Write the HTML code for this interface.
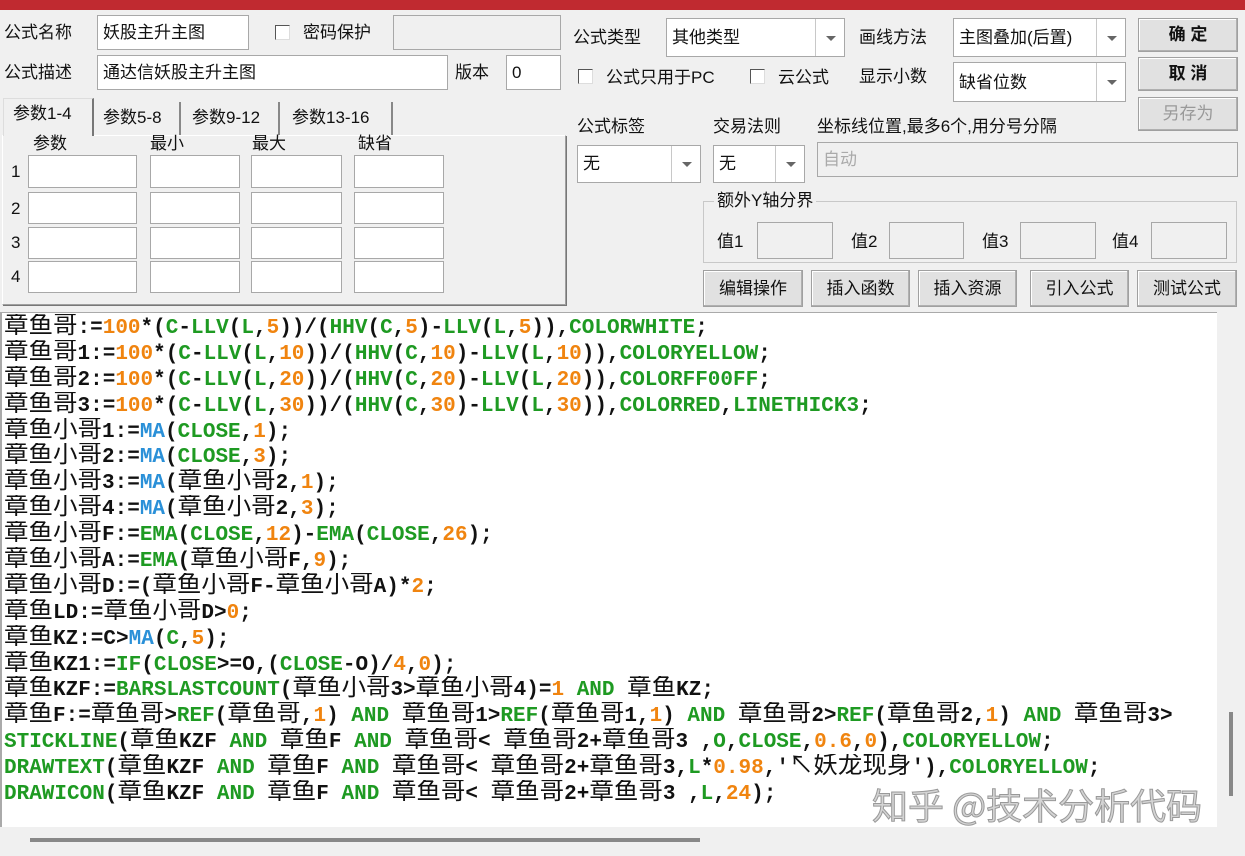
<!DOCTYPE html>
<html><head><meta charset="utf-8"><style>
*{box-sizing:border-box;margin:0;padding:0}
body{width:1245px;height:856px;background:#f0f0f0;position:relative;overflow:hidden;font-family:"Liberation Sans","Noto Sans CJK SC",sans-serif;font-size:17px;color:#111}
.a{position:absolute}
.t{position:absolute;white-space:nowrap;line-height:20px}
.in{position:absolute;background:#fff;border:1px solid #a8a8a8;padding:2px 5px;line-height:30px;white-space:nowrap}
.gi{background:#f0f0f0}
.sel{position:absolute;background:#fff;border:1px solid #a8a8a8;padding-left:5px;white-space:nowrap}
.sel .ar{position:absolute;right:0;top:0;bottom:0;width:29px;border-left:1px solid #c8c8c8}
.sel .ar:after{content:"";position:absolute;left:10px;top:50%;margin-top:-2px;border-left:5px solid transparent;border-right:5px solid transparent;border-top:5px solid #666}
.btn{position:absolute;background:#e1e1e1;border:1px solid #a0a0a0;box-shadow:inset -1px -1px 0 #b0b0b0,inset 1px 1px 0 #fff;text-align:center;white-space:nowrap}
.cb{position:absolute;width:15px;height:15px;background:#fff;border:1px solid #555;border-right-color:#ddd;border-bottom-color:#ddd}
.code{position:absolute;left:0;top:312px;width:1217px;height:515px;background:#fff;overflow:hidden;border-top:1px solid #aaa;border-left:2px solid #aaa;padding-top:1px}
.code div{font-family:"Liberation Mono",monospace;font-weight:bold;font-size:21px;height:25.9px;line-height:25.9px;margin-left:2px;color:#111;white-space:pre;overflow:hidden}
.c{font-family:"Noto Sans CJK SC","WenQuanYi Zen Hei",sans-serif;font-weight:normal;font-size:24.5px;line-height:20px}
.g{color:#1e9a22}.o{color:#f0840f}.b{color:#2a90d8}
</style></head><body>
<div class="a" style="left:0;top:0;width:1245px;height:10px;background:#c02a30"></div>

<div class="t" style="left:4px;top:23px">公式名称</div>
<div class="in" style="left:97px;top:15px;width:152px;height:35px">妖股主升主图</div>
<div class="cb" style="left:275px;top:25px"></div>
<div class="t" style="left:303px;top:23px">密码保护</div>
<div class="in gi" style="left:393px;top:15px;width:168px;height:35px"></div>
<div class="t" style="left:4px;top:63px">公式描述</div>
<div class="in" style="left:97px;top:55px;width:351px;height:35px">通达信妖股主升主图</div>
<div class="t" style="left:455px;top:63px">版本</div>
<div class="in" style="left:506px;top:55px;width:55px;height:35px">0</div>

<div class="a" style="left:2px;top:135px;width:564px;height:170px;border:1px solid #a0a0a0;border-top-color:#fff;border-left-color:#fff;box-shadow:1px 1px 0 #777"></div>
<div class="a" style="left:3px;top:98px;width:91px;height:38px;background:#f0f0f0;border:1px solid #ddd;border-bottom:none;border-right:2px solid #777"></div>
<div class="t" style="left:13px;top:104px">参数1-4</div>
<div class="a" style="left:95px;top:102px;width:86px;height:33px;border-right:2px solid #888"></div>
<div class="t" style="left:103px;top:108px">参数5-8</div>
<div class="a" style="left:183px;top:102px;width:97px;height:33px;border-right:2px solid #888"></div>
<div class="t" style="left:192px;top:108px">参数9-12</div>
<div class="a" style="left:282px;top:102px;width:111px;height:33px;border-right:2px solid #888"></div>
<div class="t" style="left:292px;top:108px">参数13-16</div>
<div class="t" style="left:33px;top:134px">参数</div>
<div class="t" style="left:150px;top:134px">最小</div>
<div class="t" style="left:252px;top:134px">最大</div>
<div class="t" style="left:358px;top:134px">缺省</div>
<div class="t" style="left:11px;top:162px">1</div>
<div class="t" style="left:11px;top:199px">2</div>
<div class="t" style="left:11px;top:233px">3</div>
<div class="t" style="left:11px;top:267px">4</div>
<div class="in" style="left:28px;top:155px;width:109px;height:33px"></div>
<div class="in" style="left:150px;top:155px;width:90px;height:33px"></div>
<div class="in" style="left:251px;top:155px;width:91px;height:33px"></div>
<div class="in" style="left:354px;top:155px;width:90px;height:33px"></div>
<div class="in" style="left:28px;top:192px;width:109px;height:32px"></div>
<div class="in" style="left:150px;top:192px;width:90px;height:32px"></div>
<div class="in" style="left:251px;top:192px;width:91px;height:32px"></div>
<div class="in" style="left:354px;top:192px;width:90px;height:32px"></div>
<div class="in" style="left:28px;top:227px;width:109px;height:32px"></div>
<div class="in" style="left:150px;top:227px;width:90px;height:32px"></div>
<div class="in" style="left:251px;top:227px;width:91px;height:32px"></div>
<div class="in" style="left:354px;top:227px;width:90px;height:32px"></div>
<div class="in" style="left:28px;top:261px;width:109px;height:32px"></div>
<div class="in" style="left:150px;top:261px;width:90px;height:32px"></div>
<div class="in" style="left:251px;top:261px;width:91px;height:32px"></div>
<div class="in" style="left:354px;top:261px;width:90px;height:32px"></div>

<div class="t" style="left:573px;top:28px">公式类型</div>
<div class="sel" style="left:666px;top:18px;width:179px;height:39px;line-height:37px">其他类型<div class="ar"></div></div>
<div class="t" style="left:859px;top:28px">画线方法</div>
<div class="sel" style="left:953px;top:18px;width:173px;height:39px;line-height:37px">主图叠加(后置)<div class="ar"></div></div>
<div class="btn" style="left:1138px;top:18px;width:100px;height:34px;line-height:32px;font-weight:bold">确 定</div>
<div class="btn" style="left:1138px;top:57px;width:100px;height:34px;line-height:32px;font-weight:bold">取 消</div>
<div class="btn" style="left:1138px;top:97px;width:100px;height:34px;line-height:32px;color:#999">另存为</div>
<div class="cb" style="left:578px;top:69px"></div>
<div class="t" style="left:606px;top:68px">公式只用于PC</div>
<div class="cb" style="left:750px;top:69px"></div>
<div class="t" style="left:778px;top:68px">云公式</div>
<div class="t" style="left:859px;top:67px">显示小数</div>
<div class="sel" style="left:953px;top:62px;width:173px;height:40px;line-height:40px">缺省位数<div class="ar"></div></div>

<div class="t" style="left:577px;top:117px">公式标签</div>
<div class="t" style="left:713px;top:117px">交易法则</div>
<div class="t" style="left:817px;top:117px">坐标线位置,最多6个,用分号分隔</div>
<div class="sel" style="left:577px;top:145px;width:124px;height:38px;line-height:36px">无<div class="ar"></div></div>
<div class="sel" style="left:713px;top:145px;width:92px;height:38px;line-height:36px">无<div class="ar"></div></div>
<div class="in gi" style="left:817px;top:142px;width:421px;height:35px;color:#aaa;line-height:29px">自动</div>

<div class="a" style="left:703px;top:201px;width:534px;height:62px;border:1px solid #c8c8c8"></div>
<div class="t" style="left:714px;top:191px;background:#f0f0f0;padding:0 3px">额外Y轴分界</div>
<div class="t" style="left:717px;top:232px">值1</div>
<div class="in gi" style="left:757px;top:222px;width:76px;height:37px"></div>
<div class="t" style="left:851px;top:232px">值2</div>
<div class="in gi" style="left:889px;top:222px;width:75px;height:37px"></div>
<div class="t" style="left:982px;top:232px">值3</div>
<div class="in gi" style="left:1020px;top:222px;width:76px;height:37px"></div>
<div class="t" style="left:1112px;top:232px">值4</div>
<div class="in gi" style="left:1151px;top:222px;width:76px;height:37px"></div>

<div class="btn" style="left:703px;top:270px;width:100px;height:37px;line-height:35px">编辑操作</div>
<div class="btn" style="left:811px;top:270px;width:99px;height:37px;line-height:35px">插入函数</div>
<div class="btn" style="left:918px;top:270px;width:99px;height:37px;line-height:35px">插入资源</div>
<div class="btn" style="left:1030px;top:270px;width:99px;height:37px;line-height:35px">引入公式</div>
<div class="btn" style="left:1137px;top:270px;width:100px;height:37px;line-height:35px">测试公式</div>

<div class="code">
<div><span class="c">章鱼哥</span>:=<span class="o">100</span>*(<span class="g">C</span>-<span class="g">LLV</span>(<span class="g">L</span>,<span class="o">5</span>))/(<span class="g">HHV</span>(<span class="g">C</span>,<span class="o">5</span>)-<span class="g">LLV</span>(<span class="g">L</span>,<span class="o">5</span>)),<span class="g">COLORWHITE</span>;</div>
<div><span class="c">章鱼哥</span>1:=<span class="o">100</span>*(<span class="g">C</span>-<span class="g">LLV</span>(<span class="g">L</span>,<span class="o">10</span>))/(<span class="g">HHV</span>(<span class="g">C</span>,<span class="o">10</span>)-<span class="g">LLV</span>(<span class="g">L</span>,<span class="o">10</span>)),<span class="g">COLORYELLOW</span>;</div>
<div><span class="c">章鱼哥</span>2:=<span class="o">100</span>*(<span class="g">C</span>-<span class="g">LLV</span>(<span class="g">L</span>,<span class="o">20</span>))/(<span class="g">HHV</span>(<span class="g">C</span>,<span class="o">20</span>)-<span class="g">LLV</span>(<span class="g">L</span>,<span class="o">20</span>)),<span class="g">COLORFF00FF</span>;</div>
<div><span class="c">章鱼哥</span>3:=<span class="o">100</span>*(<span class="g">C</span>-<span class="g">LLV</span>(<span class="g">L</span>,<span class="o">30</span>))/(<span class="g">HHV</span>(<span class="g">C</span>,<span class="o">30</span>)-<span class="g">LLV</span>(<span class="g">L</span>,<span class="o">30</span>)),<span class="g">COLORRED</span>,<span class="g">LINETHICK3</span>;</div>
<div><span class="c">章鱼小哥</span>1:=<span class="b">MA</span>(<span class="g">CLOSE</span>,<span class="o">1</span>);</div>
<div><span class="c">章鱼小哥</span>2:=<span class="b">MA</span>(<span class="g">CLOSE</span>,<span class="o">3</span>);</div>
<div><span class="c">章鱼小哥</span>3:=<span class="b">MA</span>(<span class="c">章鱼小哥</span>2,<span class="o">1</span>);</div>
<div><span class="c">章鱼小哥</span>4:=<span class="b">MA</span>(<span class="c">章鱼小哥</span>2,<span class="o">3</span>);</div>
<div><span class="c">章鱼小哥</span>F:=<span class="g">EMA</span>(<span class="g">CLOSE</span>,<span class="o">12</span>)-<span class="g">EMA</span>(<span class="g">CLOSE</span>,<span class="o">26</span>);</div>
<div><span class="c">章鱼小哥</span>A:=<span class="g">EMA</span>(<span class="c">章鱼小哥</span>F,<span class="o">9</span>);</div>
<div><span class="c">章鱼小哥</span>D:=(<span class="c">章鱼小哥</span>F-<span class="c">章鱼小哥</span>A)*<span class="o">2</span>;</div>
<div><span class="c">章鱼</span>LD:=<span class="c">章鱼小哥</span>D&gt;<span class="o">0</span>;</div>
<div><span class="c">章鱼</span>KZ:=C&gt;<span class="b">MA</span>(<span class="g">C</span>,<span class="o">5</span>);</div>
<div><span class="c">章鱼</span>KZ1:=<span class="g">IF</span>(<span class="g">CLOSE</span>&gt;=O,(<span class="g">CLOSE</span>-O)/<span class="o">4</span>,<span class="o">0</span>);</div>
<div><span class="c">章鱼</span>KZF:=<span class="g">BARSLASTCOUNT</span>(<span class="c">章鱼小哥</span>3&gt;<span class="c">章鱼小哥</span>4)=<span class="o">1</span> <span class="g">AND</span> <span class="c">章鱼</span>KZ;</div>
<div><span class="c">章鱼</span>F:=<span class="c">章鱼哥</span>&gt;<span class="g">REF</span>(<span class="c">章鱼哥</span>,<span class="o">1</span>) <span class="g">AND</span> <span class="c">章鱼哥</span>1&gt;<span class="g">REF</span>(<span class="c">章鱼哥</span>1,<span class="o">1</span>) <span class="g">AND</span> <span class="c">章鱼哥</span>2&gt;<span class="g">REF</span>(<span class="c">章鱼哥</span>2,<span class="o">1</span>) <span class="g">AND</span> <span class="c">章鱼哥</span>3&gt;</div>
<div><span class="g">STICKLINE</span>(<span class="c">章鱼</span>KZF <span class="g">AND</span> <span class="c">章鱼</span>F <span class="g">AND</span> <span class="c">章鱼哥</span>&lt; <span class="c">章鱼哥</span>2+<span class="c">章鱼哥</span>3 ,<span class="g">O</span>,<span class="g">CLOSE</span>,<span class="o">0.6</span>,<span class="o">0</span>),<span class="g">COLORYELLOW</span>;</div>
<div><span class="g">DRAWTEXT</span>(<span class="c">章鱼</span>KZF <span class="g">AND</span> <span class="c">章鱼</span>F <span class="g">AND</span> <span class="c">章鱼哥</span>&lt; <span class="c">章鱼哥</span>2+<span class="c">章鱼哥</span>3,<span class="g">L</span>*<span class="o">0.98</span>,'<span class="c">↖妖龙现身</span>'),<span class="g">COLORYELLOW</span>;</div>
<div><span class="g">DRAWICON</span>(<span class="c">章鱼</span>KZF <span class="g">AND</span> <span class="c">章鱼</span>F <span class="g">AND</span> <span class="c">章鱼哥</span>&lt; <span class="c">章鱼哥</span>2+<span class="c">章鱼哥</span>3 ,<span class="g">L</span>,<span class="o">24</span>);</div>
</div>

<div class="t" style="left:872px;top:782px;font-size:36px;line-height:44px;color:#d4d4d4;font-family:'Noto Sans CJK SC',sans-serif;-webkit-text-stroke:1px #999">知乎 @技术分析代码</div>

<div class="a" style="left:1229px;top:712px;width:4px;height:84px;background:#888"></div>
<div class="a" style="left:30px;top:838px;width:670px;height:4px;background:#888"></div>
</body></html>
